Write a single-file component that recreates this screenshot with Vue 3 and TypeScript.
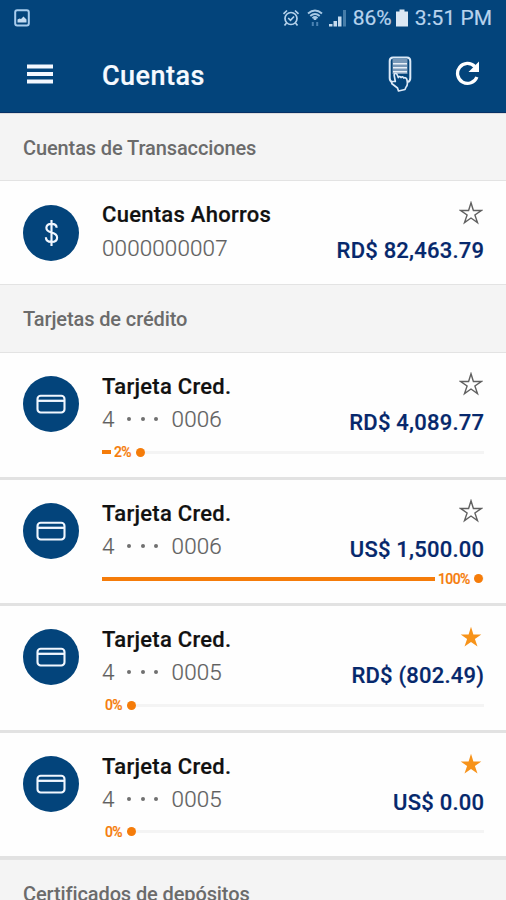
<script setup lang="ts">
interface Account {
  name: string
  number: string
  prefix?: string
  amount: string
  favorite: boolean
  percent?: number
}

interface Section {
  title: string
  accounts: Account[]
}

const sections: Section[] = [
  {
    title: 'Cuentas de Transacciones',
    accounts: [{ name: 'Cuentas Ahorros', number: '0000000007', amount: 'RD$ 82,463.79', favorite: false }],
  },
  {
    title: 'Tarjetas de crédito',
    accounts: [
      { name: 'Tarjeta Cred.', prefix: '4', number: '0006', amount: 'RD$ 4,089.77', favorite: false, percent: 2 },
      { name: 'Tarjeta Cred.', prefix: '4', number: '0006', amount: 'US$ 1,500.00', favorite: false, percent: 100 },
      { name: 'Tarjeta Cred.', prefix: '4', number: '0005', amount: 'RD$ (802.49)', favorite: true, percent: 0 },
      { name: 'Tarjeta Cred.', prefix: '4', number: '0005', amount: 'US$ 0.00', favorite: true, percent: 0 },
    ],
  },
  { title: 'Certificados de depósitos', accounts: [] },
]

// The label and the dot share the track, so a full bar stops before them.
const fillWidth = (percent: number): string =>
  percent === 0 ? '0px' : `${Math.max(9, percent * 3.33)}px`
</script>

<template>
  <div class="screen">
    <header class="header">
      <div class="status">
        <svg class="picture" width="16" height="18" viewBox="0 0 16 18">
          <rect x="1.2" y="1.2" width="13.6" height="15.4" rx="2" fill="none" stroke="#a9cdee" stroke-width="2" />
          <path d="M3.5 13.500V10.500L5.500 9.500L7 10L9.500 7.500L12.500 10.500V13.500Z" fill="#c4dcf2" />
        </svg>
        <div class="indicators">
          <svg class="alarm" width="18" height="18" viewBox="0 0 18 18" fill="none" stroke="#b5d2ec" stroke-width="1.7">
            <circle cx="9" cy="9.500" r="6" />
            <path d="M1.500 4.800L5 1.500M16.500 4.800L13 1.500M4.500 14L2.500 16.500M13.500 14L15.500 16.500M6.200 9L8.500 11.300L12 7.500" />
          </svg>
          <svg class="wifi" width="16" height="18" viewBox="0 0 16 18" fill="none" stroke="#a9cae6" stroke-width="1.9">
            <path d="M1 4.500Q8 -1.500 15 4.500M3.300 7Q8 2.800 12.700 7M5.500 9.200Q8 7 10.500 9.200" />
            <path d="M8 8.500V11" stroke-width="2.500" />
            <path d="M5.800 13V17M10.200 13V17" stroke="#4b83b3" stroke-width="2" />
          </svg>
          <svg class="signal" width="18" height="18" viewBox="0 0 18 18">
            <path d="M0 17.500V15H3.500V17.500ZM4.500 17.500V12H8V17.500ZM9 17.500V7.500H12.500V17.500Z" fill="#c5dbef" />
            <path d="M14 17.500V1H17V17.500Z" fill="#467da9" />
          </svg>
          <span class="level">86%</span>
          <svg class="battery" width="12" height="18" viewBox="0 0 12 18">
            <path d="M0 2.500H3.500V.5H8.500V2.500H12V17.500H0Z" fill="#dce8f4" />
          </svg>
          <span class="clock">3:51 PM</span>
        </div>
      </div>
      <div class="toolbar">
        <svg class="menu" width="26" height="20" viewBox="0 0 26 20">
          <path d="M0 2.500H26M0 10H26M0 17.500H26" stroke="#f4f8ff" stroke-width="4" />
        </svg>
        <h1>Cuentas</h1>
        <svg class="touch" width="24" height="36" viewBox="0 0 24 36" fill="none">
          <rect x="4.500" y="3" width="15" height="15" fill="#7898b8" />
          <path d="M5 7.700H19M5 11.700H19M5 15.700H19" stroke="#e9f0f8" stroke-width="1.500" />
          <path d="M4.500 26H4Q1.700 25 1.700 22V5Q1.700 1.500 5 1.500H19Q22.300 1.500 22.300 5V22Q22.300 25 20 26" stroke="#dce9f7" stroke-width="2" />
          <path d="M7.300 25.500L6.200 19.500Q6 17.500 7.500 17.500Q9 17.500 9.300 19L10.300 21.500Q11.500 19.500 13 21.500Q14.500 20 15.800 22Q17.500 21 18.700 23Q20.500 29 17.800 31.500L17 33.500L10.500 35L9.500 32L4 27.800Q3.200 26 4.800 25.500Z" fill="#03447b" stroke="#dce9f7" stroke-width="1.700" stroke-linejoin="round" />
        </svg>
        <svg class="refresh" width="25" height="25" viewBox="0 0 25 25" fill="none">
          <path d="M19.800 5.500A10 10 0 1 0 21.900 16" stroke="#fff" stroke-width="3.300" />
          <path d="M24 .5V11H13.500Z" fill="#fff" />
        </svg>
      </div>
    </header>

    <main>
      <section v-for="section in sections" :key="section.title">
        <h2>{{ section.title }}</h2>
        <article
          v-for="(account, index) in section.accounts"
          :key="index"
          class="account"
          :class="{ card: account.percent !== undefined }"
        >
          <div class="badge">
            <svg v-if="account.prefix" width="30" height="20" viewBox="0 0 30 20" fill="none" stroke="#f1f7ff">
              <rect x="1.500" y="1.700" width="27" height="16.800" rx="3.200" stroke-width="2.100" />
              <path d="M1.500 6.800H28.500" stroke-width="2.300" />
            </svg>
            <svg v-else width="15" height="28" viewBox="0 0 16 30" fill="none" stroke="#f1f7ff" stroke-width="2.3">
              <path d="M13.500 9.500Q13.500 5.200 8 5.200Q2.500 5.200 2.500 9.500Q2.500 13 8 14.500Q14 16 14 20Q14 24.500 8 24.500Q2 24.500 2 19.500M8 1V29" />
            </svg>
          </div>
          <div class="details">
            <div class="line">
              <h3>{{ account.name }}</h3>
              <svg class="star" :class="{ favorite: account.favorite }" width="24" height="24" viewBox="0 0 24 24">
                <path d="M12 1.800L14.400 9.500H22.300L15.900 14L18.500 21.600L12 17L5.500 21.600L8.100 14L1.700 9.500H9.600Z" />
              </svg>
            </div>
            <div class="line values">
              <div class="number">
                <template v-if="account.prefix">
                  <span>{{ account.prefix }}</span>
                  <span class="mask"><i /><i /><i /></span>
                </template>
                <span>{{ account.number }}</span>
              </div>
              <strong>{{ account.amount }}</strong>
            </div>
            <div v-if="account.percent !== undefined" class="usage">
              <span class="fill" :style="{ width: fillWidth(account.percent) }" />
              <span class="percent">{{ account.percent }}%</span>
              <span class="dot" />
              <span class="track" />
            </div>
          </div>
        </article>
      </section>
    </main>
  </div>
</template>

<style>
body {
  margin: 0;
}
</style>

<style scoped>
.screen {
  width: 506px;
  height: 900px;
  overflow: hidden;
  background: #fefefe;
  font-family: Roboto, "Liberation Sans", sans-serif;
}
.screen svg {
  display: block;
  flex: none;
}
.header {
  box-sizing: border-box;
  height: 113px;
  background: #03447b;
  border-bottom: 1px solid #063066;
}
.status {
  height: 36px;
  display: flex;
  align-items: center;
  justify-content: space-between;
  padding: 0 14px 0 14px;
}
.indicators {
  display: flex;
  align-items: center;
  color: #b8d3ed;
  font-size: 21px;
  line-height: 36px;
  -webkit-text-stroke: 0.2px currentColor;
}
.wifi {
  margin-left: 7px;
}
.signal {
  margin-left: 6px;
}
.level {
  margin-left: 6px;
}
.battery {
  margin: 0 7px 0 4px;
}
.toolbar {
  height: 76px;
  display: flex;
  align-items: center;
  padding: 0 26px 0 27px;
}
h1 {
  margin: 3px auto 0 49px;
  color: #f6faff;
  font-size: 27px;
  line-height: 32px;
  font-weight: 500;
  letter-spacing: 0.45px;
  -webkit-text-stroke: 0.2px currentColor;
}
.touch {
  margin-top: -1px;
}
.refresh {
  margin: -1px 0 0 43px;
}
h2 {
  box-sizing: border-box;
  height: 69px;
  margin: 0;
  padding-left: 23px;
  background: #f4f4f4;
  border-top: 1px solid #e3e3e3;
  border-bottom: 1px solid #e3e3e3;
  color: #6b6b6b;
  font-size: 20px;
  line-height: 68px;
  font-weight: 500;
  letter-spacing: -0.11px;
}
section:first-child h2 {
  height: 68px;
  border-top-color: #ddd;
}
.account {
  box-sizing: border-box;
  height: 103px;
  display: flex;
  gap: 23px;
  padding: 24px 22px 0 23px;
}
section:nth-child(1) .account h3 {
  margin-top: -1px;
}
.account.card {
  height: 126.6px;
  padding-top: 23px;
  border-bottom: 3px solid #e2e2e2;
}
.badge {
  flex: none;
  width: 56px;
  height: 56px;
  display: flex;
  align-items: center;
  justify-content: center;
  border-radius: 50%;
  background: #03447b;
}
.details {
  flex: 1;
}
.line {
  display: flex;
  justify-content: space-between;
  height: 22px;
}
h3 {
  margin: 0;
  color: #111;
  font-size: 22px;
  line-height: 22px;
  font-weight: 500;
  letter-spacing: 0.28px;
  -webkit-text-stroke: 0.2px currentColor;
}
.star {
  margin: -4px 1px 0 0;
  fill: none;
  stroke: #606060;
  stroke-width: 1.4;
}
.star.favorite {
  fill: #f7931a;
  stroke: none;
}
.values {
  margin-top: 10px;
}
.number {
  display: flex;
  color: #606060;
  font-size: 22.4px;
  line-height: 22px;
  font-weight: 300;
  letter-spacing: 0.15px;
  -webkit-text-stroke: 0.2px currentColor;
}
.mask {
  display: flex;
  align-items: center;
  gap: 9.500px;
  margin: 0 13.500px 0 12.500px;
}
.mask i {
  width: 4px;
  height: 4px;
  border-radius: 50%;
  background: #707070;
}
strong {
  margin: 3.400px -0.200px 0 0;
  color: #06286c;
  font-size: 22px;
  line-height: 22px;
  font-weight: 500;
  letter-spacing: 0.22px;
  -webkit-text-stroke: 0.2px currentColor;
}
.card strong {
  margin-top: 4px;
}
.usage {
  display: flex;
  align-items: center;
  height: 14px;
  margin-top: 15px;
}
.fill {
  height: 4px;
  background: #f57c0a;
}
.percent {
  margin: 0 4.500px 0 3px;
  color: #f57c0a;
  font-size: 14px;
  line-height: 14px;
  font-weight: 500;
  letter-spacing: -0.6px;
  -webkit-text-stroke: 0.2px currentColor;
}
.dot {
  width: 9px;
  height: 9px;
  border-radius: 50%;
  background: #f57c0a;
}
.track {
  flex: 1;
  height: 3px;
  background: #f4f4f4;
}
</style>
